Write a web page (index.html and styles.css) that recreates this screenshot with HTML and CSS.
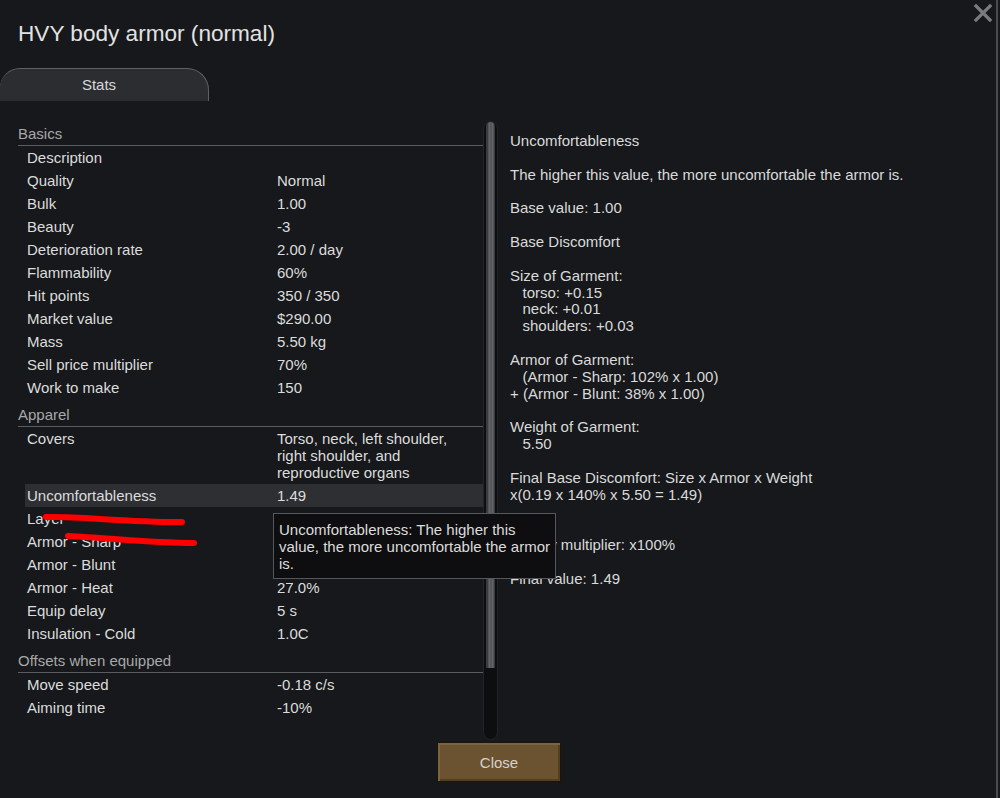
FILE: index.html
```html
<!DOCTYPE html>
<html lang="en">
<head>
  <meta charset="UTF-8">
  <title>HVY body armor (normal)</title>
  <link rel="stylesheet" href="styles.css">
</head>
<body>
  <div class="window">
    <svg class="close-x" width="20" height="20" viewBox="0 0 20 20">
      <path d="M3 3 L17 17 M17 3 L3 17" stroke="#7a7b7d" stroke-width="3.2" stroke-linecap="square"/>
    </svg>

    <h1 class="title">HVY body armor (normal)</h1>
    <div class="tab">Stats</div>

    <div class="content">
      <div class="stats">
        <div class="section">Basics</div>
        <div class="row"><span class="label">Description</span><span class="value"></span></div>
        <div class="row"><span class="label">Quality</span><span class="value">Normal</span></div>
        <div class="row"><span class="label">Bulk</span><span class="value">1.00</span></div>
        <div class="row"><span class="label">Beauty</span><span class="value">-3</span></div>
        <div class="row"><span class="label">Deterioration rate</span><span class="value">2.00 / day</span></div>
        <div class="row"><span class="label">Flammability</span><span class="value">60%</span></div>
        <div class="row"><span class="label">Hit points</span><span class="value">350 / 350</span></div>
        <div class="row"><span class="label">Market value</span><span class="value">$290.00</span></div>
        <div class="row"><span class="label">Mass</span><span class="value">5.50 kg</span></div>
        <div class="row"><span class="label">Sell price multiplier</span><span class="value">70%</span></div>
        <div class="row"><span class="label">Work to make</span><span class="value">150</span></div>

        <div class="section">Apparel</div>
        <div class="row"><span class="label">Covers</span><span class="value">Torso, neck, left shoulder,<br>right shoulder, and<br>reproductive organs</span></div>
        <div class="row selected"><span class="label">Uncomfortableness</span><span class="value">1.49</span></div>
        <div class="row"><span class="label">Layer</span><span class="value">Middle</span></div>
        <div class="row"><span class="label">Armor - Sharp</span><span class="value">102%</span></div>
        <div class="row"><span class="label">Armor - Blunt</span><span class="value">38%</span></div>
        <div class="row"><span class="label">Armor - Heat</span><span class="value">27.0%</span></div>
        <div class="row"><span class="label">Equip delay</span><span class="value">5 s</span></div>
        <div class="row"><span class="label">Insulation - Cold</span><span class="value">1.0C</span></div>

        <div class="section">Offsets when equipped</div>
        <div class="row"><span class="label">Move speed</span><span class="value">-0.18 c/s</span></div>
        <div class="row"><span class="label">Aiming time</span><span class="value">-10%</span></div>
      </div>

      <div class="scrollbar"><div class="thumb"></div></div>

      <div class="explain">Uncomfortableness

The higher this value, the more uncomfortable the armor is.

Base value: 1.00

Base Discomfort

Size of Garment:
   torso: +0.15
   neck: +0.01
   shoulders: +0.03

Armor of Garment:
   (Armor - Sharp: 102% x 1.00)
+ (Armor - Blunt: 38% x 1.00)

Weight of Garment:
   5.50

Final Base Discomfort: Size x Armor x Weight
x(0.19 x 140% x 5.50 = 1.49)


Quality multiplier: x100%

Final value: 1.49</div>
    </div>

    <div class="footer">
      <button class="close-btn">Close</button>
    </div>

    <!-- hover tooltip for the selected stat -->
    <div class="tooltip">Uncomfortableness: The higher this value, the more uncomfortable the armor is.</div>

    <!-- marker strokes drawn on top -->
    <svg class="marks" width="1000" height="798" viewBox="0 0 1000 798">
      <path d="M46 517 C 80 516, 120 522, 182 522" stroke="#ff0000" stroke-width="6" fill="none" stroke-linecap="round"/>
      <path d="M68 536 C 110 538, 150 543, 194 543" stroke="#ff0000" stroke-width="6" fill="none" stroke-linecap="round"/>
    </svg>
  </div>
</body>
</html>
```

FILE: styles.css
```css
body, html {
  margin: 0;
  padding: 0;
  background: #16181b;
}
body {
  font-family: "Liberation Sans", Arial, sans-serif;
  color: #dcdcdc;
}
.window {
  position: relative;
  width: 996px;
  height: 798px;
  background: #16181b;
  border-right: 2px solid #4a4c50;
  overflow: hidden;
}
.close-x {
  position: absolute;
  top: 3px;
  right: 3px;
}
.title {
  margin: 0;
  padding: 21px 0 0 18px;
  height: 26px;
  font-size: 22.6px;
  line-height: 26px;
  font-weight: normal;
  color: #e2e2e2;
}
.tab {
  margin-top: 21px;
  width: 198px;
  height: 32px;
  padding-right: 10px;
  line-height: 32px;
  text-align: center;
  font-size: 15px;
  color: #d8d8d8;
  background: #2c2d30;
  border-top: 1px solid #5e5f62;
  border-right: 1px solid #5e5f62;
  border-radius: 20px 22px 0 0;
}
.content {
  display: flex;
  height: 641px;
  padding-left: 18px;
}
.stats {
  width: 465px;
  padding-top: 22px;
  font-size: 15px;
}
.section {
  margin-top: 5px;
  height: 22px;
  line-height: 22px;
  border-bottom: 1px solid #5b5c5e;
  color: #a8a8a8;
}
.stats .section:first-child {
  margin-top: 0;
}
.row {
  display: flex;
  padding: 3px 0 3px 9px;
  line-height: 17px;
}
.row.selected {
  margin-left: 7px;
  padding-left: 2px;
  background: #2d2f33;
}
.label {
  width: 250px;
}
.value {
  flex: 1;
}
.scrollbar {
  margin-top: 20px;
  width: 13px;
  height: 617px;
  background: #0d0e10;
  border: 1px solid #222428;
  border-radius: 8px;
}
.thumb {
  height: 546px;
  margin: 0 2px;
  border-radius: 5px 5px 0 0;
  background: linear-gradient(to right, #3a3b3e 0, #3a3b3e 2px, #6a6b6e 3px, #4f5053 5px, #6a6b6e 7px, #3a3b3e 8px);
}
.explain {
  padding: 32px 0 0 12px;
  white-space: pre;
  font-size: 15px;
  line-height: 16.85px;
  color: #dadada;
}
.footer {
  display: flex;
  justify-content: center;
  padding-left: 2px;
}
.close-btn {
  width: 124px;
  height: 40px;
  background: #6b5332;
  border: 1px solid #1a140c;
  box-shadow: inset 2px 2px 0 #7d6440, inset -2px -2px 0 #54401f;
  color: #d6d2cc;
  font-family: "Liberation Sans", Arial, sans-serif;
  font-size: 15px;
}
.tooltip {
  position: absolute;
  left: 273px;
  top: 513px;
  width: 276px;
  height: 57px;
  padding: 7px 0 0 5px;
  background: #0e0e10;
  border: 1px solid #56575a;
  font-size: 15px;
  line-height: 17px;
  color: #dcdcdc;
}
.marks {
  position: absolute;
  left: 0;
  top: 0;
  pointer-events: none;
}
```
